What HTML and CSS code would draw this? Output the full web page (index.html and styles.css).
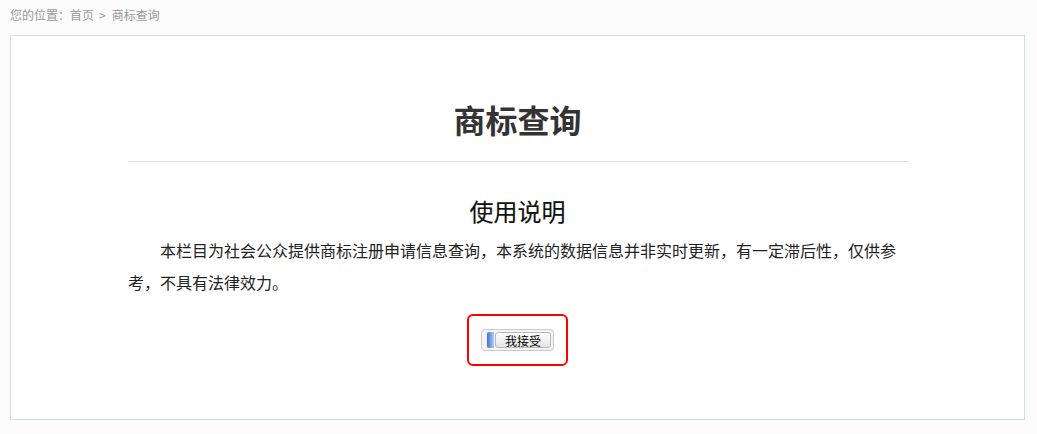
FILE: index.html
```html
<!DOCTYPE html>
<html lang="zh-CN">
<head>
<meta charset="utf-8">
<title>商标查询</title>
<link rel="stylesheet" href="styles.css">
</head>
<body>
<div class="crumb">您的位置：<a class="crumb-link">首页</a><span class="crumb-sep">&gt;</span><span>商标查询</span></div>
<div class="panel">
  <h1 class="title">商标查询</h1>
  <hr class="rule">
  <h2 class="subtitle">使用说明</h2>
  <p class="desc">本栏目为社会公众提供商标注册申请信息查询，本系统的数据信息并非实时更新，有一定滞后性，仅供参考，不具有法律效力。</p>
  <div class="accept-wrap">
    <div class="accept-box">
      <button class="accept-btn" type="button"><span class="btn-cap"></span><span class="btn-face">我接受</span></button>
    </div>
  </div>
</div>
</body>
</html>
```
FILE: styles.css
```css
html, body {
  margin: 0;
  padding: 0;
}
body {
  background: #fbfbfb;
  font-family: "Noto Sans CJK SC", "Noto Sans", "Liberation Sans", sans-serif;
  color: #333;
}
.crumb {
  height: 35px;
  line-height: 30px;
  padding-left: 10px;
  font-size: 12px;
  color: #999;
}
.crumb-link {
  color: #999;
}
.crumb-sep {
  margin: 0 6px 0 5px;
}
.panel {
  box-sizing: border-box;
  width: 1015px;
  height: 385px;
  margin-left: 10px;
  background: #fff;
  border: 1px solid #d3dcea;
  padding: 63px 0 0;
}
.title {
  margin: 0;
  font-size: 32px;
  line-height: 40px;
  font-weight: bold;
  text-align: center;
  color: #333;
}
.rule {
  width: 780px;
  margin: 22px auto 0;
  border: 0;
  height: 1px;
  background: #d9d9d9;
}
.subtitle {
  margin: 33px 0 0;
  font-size: 24px;
  line-height: 32px;
  font-weight: normal;
  text-align: center;
  color: #111;
  -webkit-text-stroke: 0.12px #111;
}
.desc {
  width: 768px;
  margin: 7px 0 0 117px;
  font-size: 16px;
  line-height: 32px;
  text-indent: 2em;
  text-align: justify;
  color: #222;
}
.accept-wrap {
  display: flex;
  justify-content: center;
  margin-top: 16px;
}
.accept-box {
  box-sizing: border-box;
  width: 101px;
  height: 52px;
  border: 2px solid #f00;
  border-radius: 6px;
  display: flex;
  align-items: center;
  justify-content: center;
}
.accept-btn {
  box-sizing: border-box;
  width: 73px;
  height: 22px;
  padding: 2px 2px 2px 5px;
  border: 1px solid #c9c9c9;
  border-radius: 4px;
  background: #f4f4f4;
  display: flex;
  align-items: stretch;
  gap: 1px;
  cursor: pointer;
}
.btn-cap {
  width: 7px;
  border-radius: 2px 0 0 2px;
  background: linear-gradient(to right, #3f6fd6, #b3cdf5);
}
.btn-face {
  flex: 1;
  border: 1px solid #b9b9b9;
  border-radius: 3px;
  background: linear-gradient(#ffffff, #e4e4e4);
  font-size: 12px;
  line-height: 13px;
  color: #000;
  display: flex;
  align-items: center;
  justify-content: center;
  font-family: "Noto Sans CJK SC", sans-serif;
}
```
